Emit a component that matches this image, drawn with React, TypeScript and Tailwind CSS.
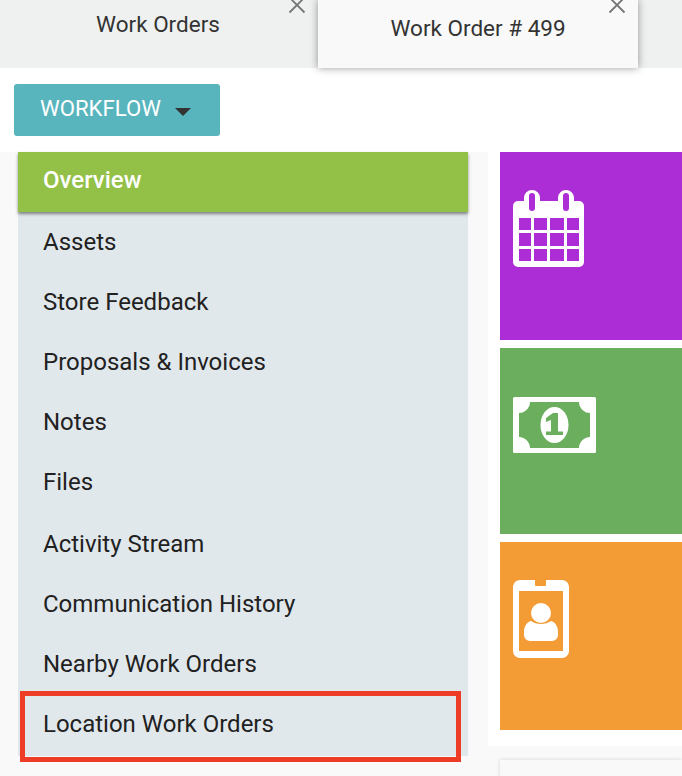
const menuItems = [
  { label: "Assets", height: "h-[60px]" },
  { label: "Store Feedback", height: "h-[60px]" },
  { label: "Proposals & Invoices", height: "h-[60px]" },
  { label: "Notes", height: "h-[60px]" },
  { label: "Files", height: "h-[62px]" },
  { label: "Activity Stream", height: "h-[60px]" },
  { label: "Communication History", height: "h-[60px]" },
  { label: "Nearby Work Orders", height: "h-[60px]" },
  { label: "Location Work Orders", height: "h-[62px]" },
];

function CloseIcon() {
  return (
    <svg width="18" height="18" viewBox="0 0 18 18" fill="none" stroke="#757575" strokeWidth="1.8">
      <path d="M1.5 1.5 16.5 16.5M16.5 1.5 1.5 16.5" />
    </svg>
  );
}

function CalendarIcon() {
  return (
    <svg width="72" height="78" viewBox="0 0 72 78" fill="white">
      <path
        fillRule="evenodd"
        d="M5 11h6V8a8 8 0 0 1 16 0v3h18V8a8 8 0 0 1 16 0v3h5a5 5 0 0 1 5 5v56a5 5 0 0 1-5 5H5a5 5 0 0 1-5-5V16a5 5 0 0 1 5-5ZM16 6v12a3 3 0 0 0 6 0V6a3 3 0 0 0-6 0Zm34 0v12a2.700 2.700 0 0 0 6 0V6a3 3 0 0 0-6 0ZM6 28v12h12V28H6Zm15 0v12h13V28H21Zm16 0v12h14V28H37Zm17 0v12h12V28H54ZM6 43v13h12V43H6Zm15 0v13h13V43H21Zm16 0v13h14V43H37Zm17 0v13h12V43H54ZM6 59v12h12V59H6Zm15 0v12h13V59H21Zm16 0v12h14V59H37Zm17 0v12h12V59H54Z"
      />
    </svg>
  );
}

function MoneyIcon() {
  return (
    <svg width="83" height="56" viewBox="0 0 83 56">
      <rect width="83" height="56" rx="1.5" fill="white" />
      <path
        d="M17 5h49c0 6 5 11 11 11v24c-6 0-11 5-11 11H17c0-6-5-11-11-11V16c6 0 11-5 11-11Z"
        fill="#6aae5e"
      />
      <ellipse cx="41.5" cy="28" rx="14" ry="18" fill="white" />
      <path d="M33 38h17v-3.500h-5V16h-5l-7 5v4l5-2v11.500h-5Z" fill="#6aae5e" />
    </svg>
  );
}

function BadgeIcon() {
  return (
    <svg width="56" height="78" viewBox="0 0 56 78" fill="white">
      <path
        fillRule="evenodd"
        d="M7 0h15v5a1 1 0 0 0 1 1h9a1 1 0 0 0 1-1V0h16a7 7 0 0 1 7 7v64a7 7 0 0 1-7 7H7a7 7 0 0 1-7-7V7a7 7 0 0 1 7-7Zm-1 11v60h44V11H6Z"
      />
      <circle cx="28" cy="33" r="10" />
      <path d="M17 61a6 6 0 0 1-6-6v-3c0-6 3-10 7-11 3 2 6 3 10 3s7-1 10-3c4 1 7 5 7 11v3a6 6 0 0 1-6 6H17Z" />
    </svg>
  );
}

export default function App() {
  return (
    <div className="relative h-[776px] w-[682px] overflow-hidden bg-[#f9f9f9] font-['Roboto',sans-serif] text-[#333]">
      {/* Tabs */}
      <div className="relative z-10 flex h-[68px] bg-[#eff1f1]">
        <div className="relative flex h-full w-[318px] justify-center pt-[10px] pr-[2px] text-[22.500px] leading-7 text-[#333]">
          Work Orders
          <span className="absolute -top-[4px] left-[288px]">
            <CloseIcon />
          </span>
        </div>
        <div className="relative flex h-full w-[320px] justify-center bg-[#f9f9f9] pt-[14px] text-[22.500px] leading-7 shadow-[0_0_8px_rgba(0,0,0,0.4)]">
          Work Order # 499
          <span className="absolute -top-[4px] left-[290px]">
            <CloseIcon />
          </span>
        </div>
      </div>

      {/* Toolbar */}
      <div className="flex h-[84px] items-center bg-white px-[14px]">
        <button className="flex h-[52px] w-[206px] items-center gap-[14px] rounded-[3px] bg-[#58b5be] pb-[3px] pl-[26px] text-[22.200px] text-white">
          WORKFLOW
          <span className="mt-[6px] h-0 w-0 border-x-[8px] border-t-[8px] border-x-transparent border-t-[#333]" />
        </button>
      </div>

      {/* Content */}
      <div className="flex items-start">
        <div className="ml-[18px] w-[450px] bg-[#e1e8ec]">
          <div className="flex h-[60px] items-center bg-[#93c047] pb-[4px] pl-[25px] text-[24px] font-medium text-white shadow-[0_2px_3px_rgba(0,0,0,0.45)]">
            Overview
          </div>
          <ul>
            {menuItems.map((item) => (
              <li
                key={item.label}
                className={`flex items-start pt-[15px] pl-[25px] text-[24px] leading-[30px] text-[#212121] ${item.height}`}
              >
                {item.label}
              </li>
            ))}
          </ul>
        </div>

        <div className="ml-[20px] flex h-[594px] w-[194px] flex-col gap-2 bg-white pl-3">
          <div className="h-[188px] bg-[#ac2cd6] pt-[38px] pl-[13px]">
            <CalendarIcon />
          </div>
          <div className="h-[186px] bg-[#6aae5e] pt-[49px] pl-[13px]">
            <MoneyIcon />
          </div>
          <div className="h-[188px] bg-[#f39c36] pt-[38px] pl-[13px]">
            <BadgeIcon />
          </div>
        </div>
      </div>

      {/* Bottom card peeking in */}
      <div className="absolute top-[760px] left-[500px] h-[40px] w-[182px] bg-[#f9f9f9] shadow-[0_0_4px_rgba(0,0,0,0.15)]" />

      {/* Red highlight annotation */}
      <div className="absolute top-[691px] left-[20px] h-[71px] w-[441px] border-[5px] border-[#ee3d26]" />
    </div>
  );
}
